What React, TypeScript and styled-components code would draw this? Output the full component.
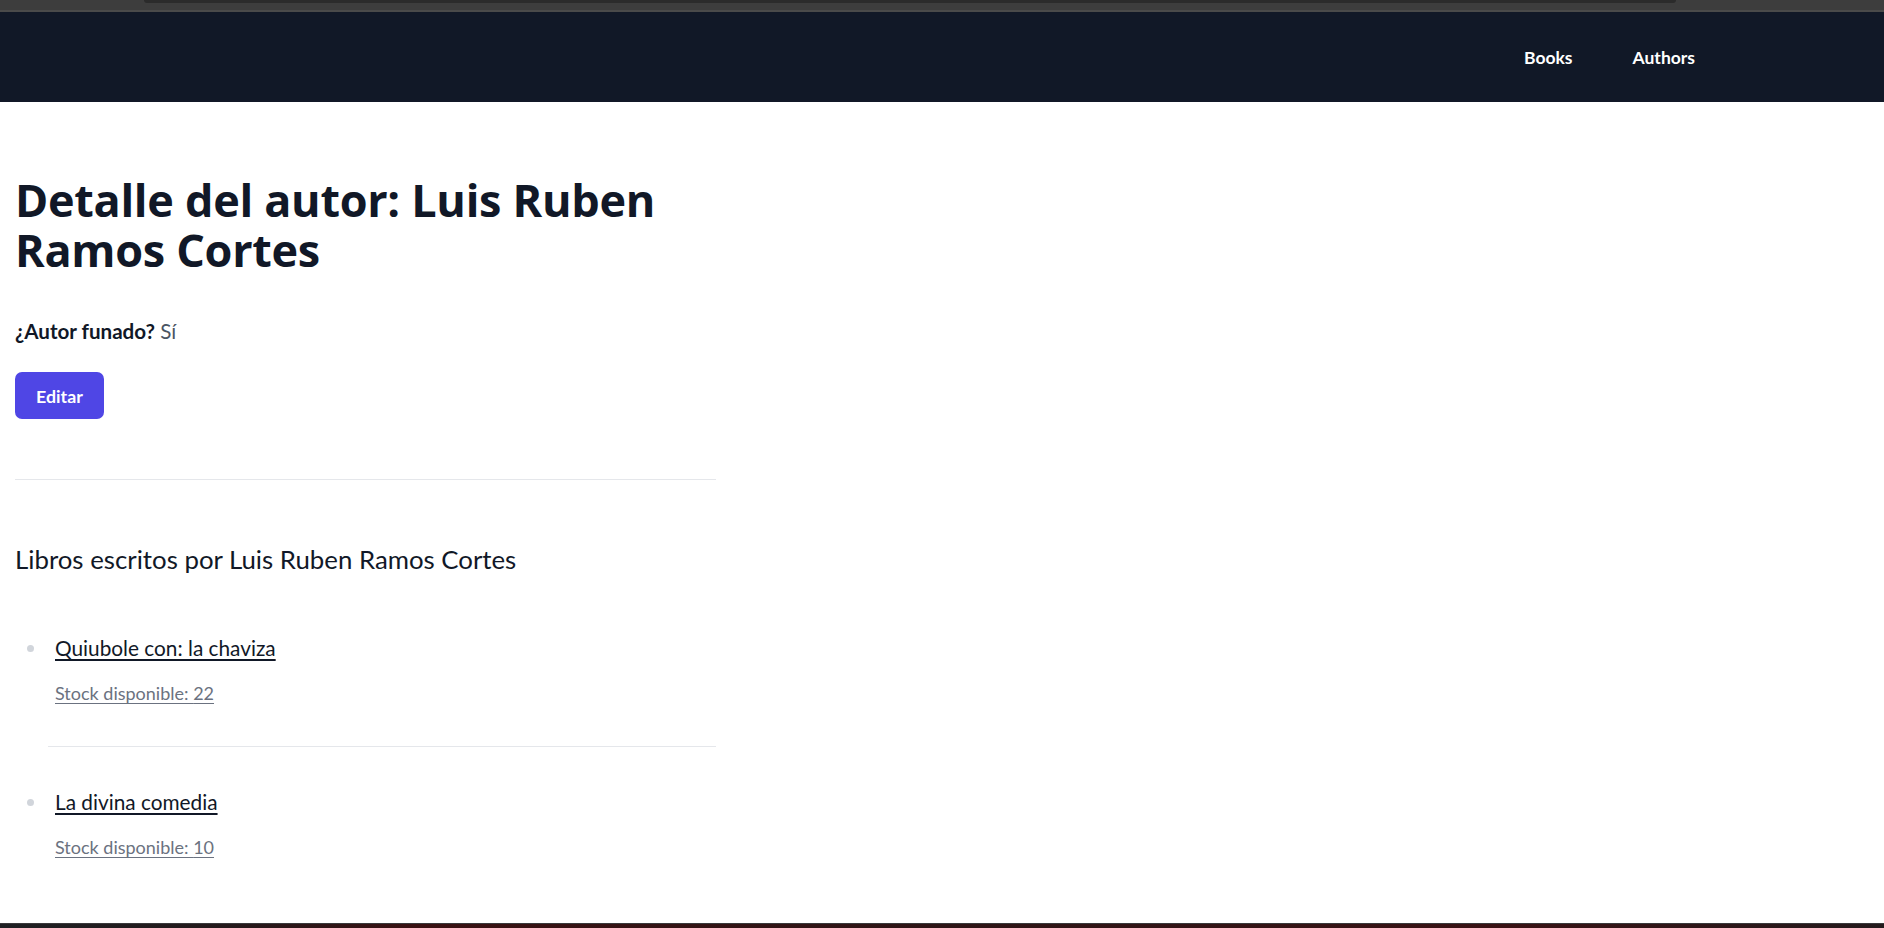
import React from "react";
import styled, { createGlobalStyle } from "styled-components";

const GlobalStyle = createGlobalStyle`
  html, body {
    margin: 0;
    padding: 0;
    background: #ffffff;
  }
  body {
    font-family: Lato, "Noto Sans", "Liberation Sans", sans-serif;
    color: #111827;
  }
  * { box-sizing: border-box; }
`;

const Page = styled.div`
  display: flex;
  flex-direction: column;
  min-height: 100vh;
`;

const ChromeBar = styled.div`
  height: 12px;
  background: #3d3d3d;
  border-bottom: 2px solid #4a4a4a;
  padding-left: 144px;
`;

const ChromeTab = styled.div`
  width: 1532px;
  height: 3px;
  background: #2b2b2b;
  border-radius: 0 0 10px 10px;
`;

const NavBar = styled.nav`
  height: 90px;
  background: #111827;
  display: flex;
  align-items: center;
  justify-content: flex-end;
  gap: 60px;
  padding-right: 189px;
`;

const NavLink = styled.a`
  color: #ffffff;
  font-size: 17.5px;
  line-height: 25px;
  font-weight: 700;
  text-decoration: none;
`;

const Main = styled.main`
  flex: 1;
  width: 731px;
  padding: 73px 15px 0;
`;

const Title = styled.h1`
  margin: 0;
  font-family: "Open Sans", Lato, sans-serif;
  font-size: 45px;
  line-height: 50px;
  font-weight: 700;
  letter-spacing: -0.3px;
  color: #111827;
`;

const Meta = styled.p`
  margin: 41px 0 0;
  font-size: 20.6px;
  line-height: 30px;
  color: #111827;
`;

const MetaLabel = styled.strong`
  font-weight: 700;
`;

const MetaValue = styled.span`
  color: #4b5563;
`;

const EditButton = styled.button`
  margin-top: 26px;
  height: 47px;
  padding: 0 21px;
  border: none;
  border-radius: 7px;
  background: #4f46e5;
  color: #ffffff;
  font-family: inherit;
  font-size: 17.8px;
  font-weight: 700;
  cursor: pointer;
  display: block;
`;

const Divider = styled.hr`
  margin: 60px 0 0;
  border: none;
  border-top: 1px solid #e5e7eb;
`;

const SectionTitle = styled.h2`
  margin: 62px 0 0;
  font-size: 25.8px;
  line-height: 35px;
  font-weight: 400;
  color: #111827;
`;

const BookList = styled.ul`
  margin: 16px 0 0;
  padding: 0 0 0 33px;
  list-style: none;
`;

const BookItem = styled.li`
  position: relative;
  padding: 40px 0 40px 7px;

  & + & {
    border-top: 1px solid #e5e7eb;
  }

  &::before {
    content: "";
    position: absolute;
    left: -21px;
    top: 52px;
    width: 7px;
    height: 7px;
    border-radius: 50%;
    background: #d1d5db;
  }
`;

const BookLink = styled.a<{ $muted?: boolean }>`
  display: block;
  width: fit-content;
  margin-top: ${(p) => (p.$muted ? "18px" : "0")};
  font-size: ${(p) => (p.$muted ? "18px" : "20.8px")};
  line-height: ${(p) => (p.$muted ? "25px" : "30px")};
  color: ${(p) => (p.$muted ? "#6b7280" : "#111827")};
  text-decoration: underline;
  text-decoration-thickness: ${(p) => (p.$muted ? "1px" : "1.5px")};
  text-underline-offset: 3px;
  cursor: pointer;
`;

const Taskbar = styled.div`
  height: 5px;
  border-top: 1px solid #3a3a3c;
  background: linear-gradient(90deg, #1f2023 0%, #24191b 12%, #3a1112 22%, #2e1516 50%, #3a1214 80%, #241a1c 100%);
`;

const books = [
  { title: "Quiubole con: la chaviza", stock: 22 },
  { title: "La divina comedia", stock: 10 },
];

export default function App() {
  const author = "Luis Ruben Ramos Cortes";
  return (
    <>
      <GlobalStyle />
      <Page>
        <ChromeBar>
          <ChromeTab />
        </ChromeBar>
        <NavBar>
          <NavLink href="#">Books</NavLink>
          <NavLink href="#">Authors</NavLink>
        </NavBar>
        <Main>
          <Title>Detalle del autor: {author}</Title>
          <Meta>
            <MetaLabel>¿Autor funado?</MetaLabel> <MetaValue>Sí</MetaValue>
          </Meta>
          <EditButton>Editar</EditButton>
          <Divider />
          <SectionTitle>Libros escritos por {author}</SectionTitle>
          <BookList>
            {books.map((b) => (
              <BookItem key={b.title}>
                <BookLink href="#">{b.title}</BookLink>
                <BookLink href="#" $muted>
                  Stock disponible: {b.stock}
                </BookLink>
              </BookItem>
            ))}
          </BookList>
        </Main>
        <Taskbar />
      </Page>
    </>
  );
}
